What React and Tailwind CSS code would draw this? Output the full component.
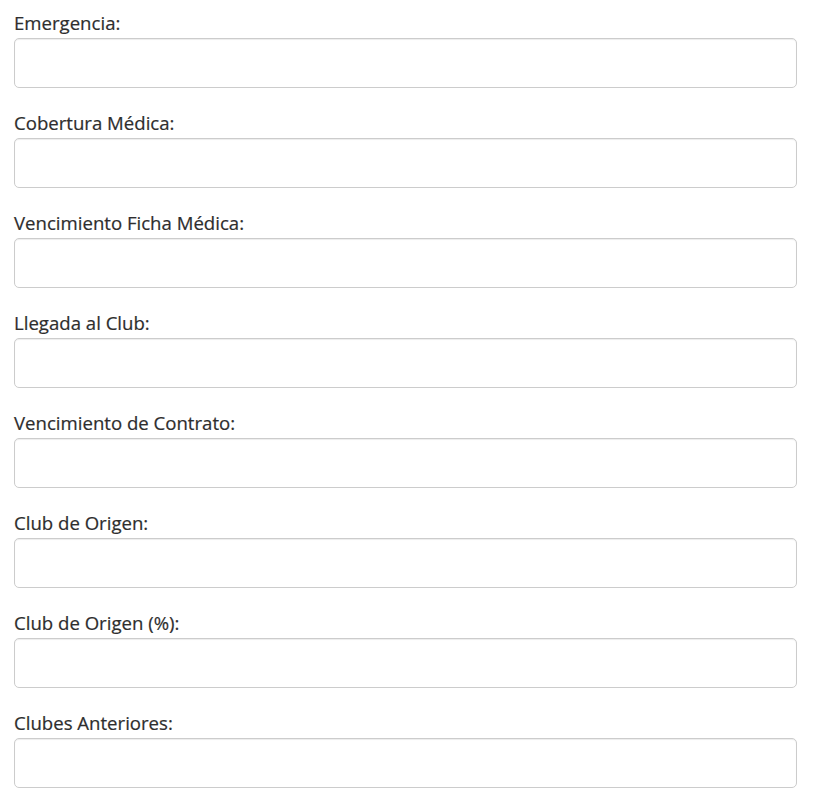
export default function App() {
  const labels = [
    "Emergencia:",
    "Cobertura Médica:",
    "Vencimiento Ficha Médica:",
    "Llegada al Club:",
    "Vencimiento de Contrato:",
    "Club de Origen:",
    "Club de Origen (%):",
    "Clubes Anteriores:",
  ];
  return (
    <div className="w-[834px] h-[796px] bg-white pt-[10px] pl-[14px]" style={{ fontFamily: '"Open Sans", sans-serif' }}>
      {labels.map((l) => (
        <div key={l} className="h-[100px] flex flex-col">
          <label className="block text-[18.6px] leading-[26px] text-[#2e2e2e] h-[26px] [-webkit-text-stroke:0.2px_#2e2e2e]">{l}</label>
          <div className="mt-[1.5px] w-[783px] h-[50px] rounded-[5px] border border-[#cccccc] bg-white shadow-[inset_0_1px_1px_rgba(0,0,0,0.075)]"></div>
        </div>
      ))}
    </div>
  );
}
